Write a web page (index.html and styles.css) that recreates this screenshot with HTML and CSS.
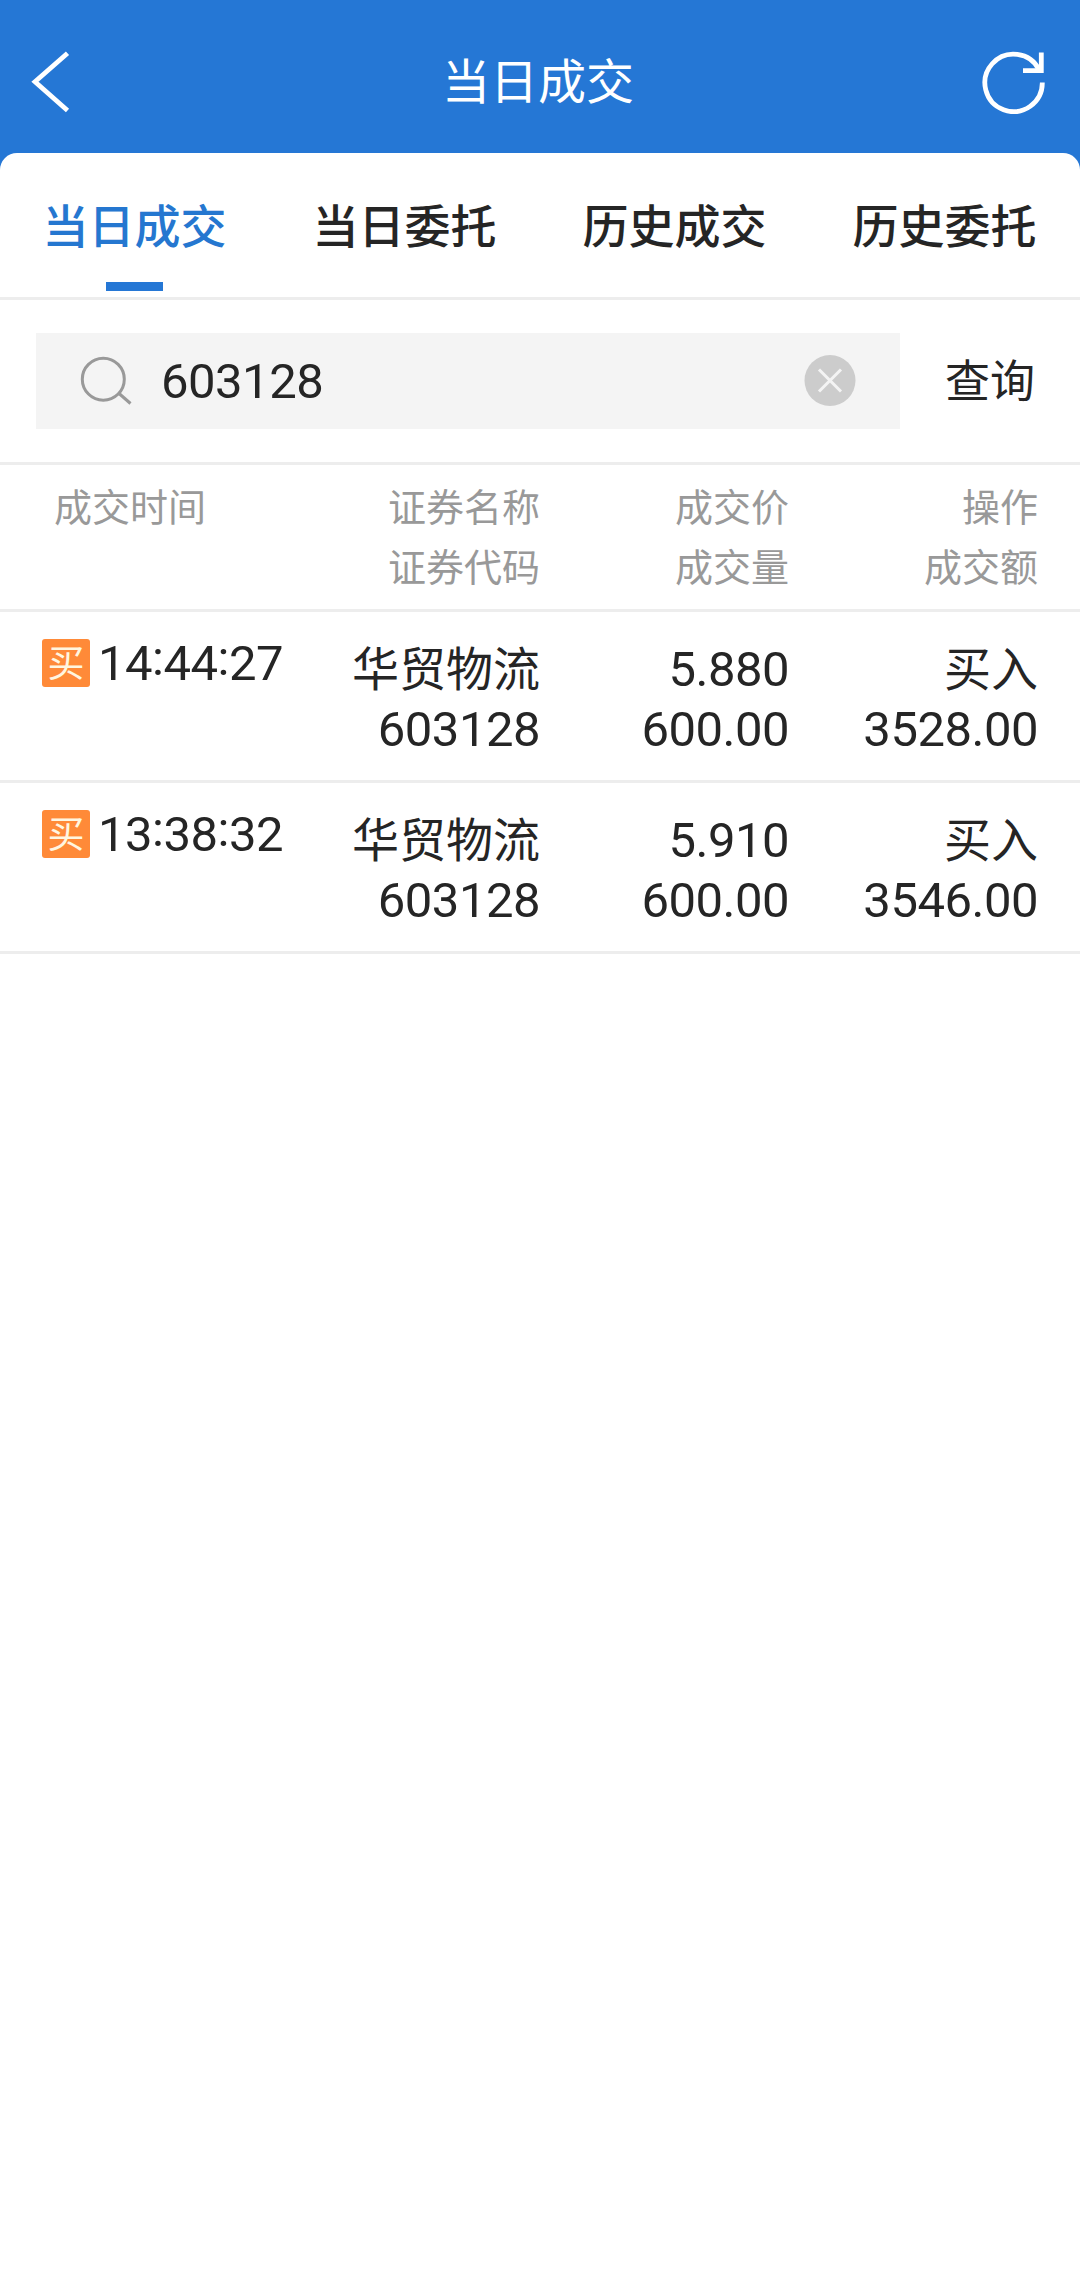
FILE: index.html
```html
<!DOCTYPE html>
<html lang="zh-CN">
<head>
    <meta charset="UTF-8">
    <meta name="viewport" content="width=device-width, initial-scale=1.0">
    <title>当日成交</title>
    <link rel="stylesheet" href="styles.css">
</head>
<body>
    <header class="navbar">
        <svg class="back-icon" width="40" height="64" viewBox="0 0 40 64">
            <path d="M36.5 3.2L4 31.8L36.5 60.5"/>
        </svg>
        <h1>当日成交</h1>
        <svg class="refresh-icon" width="64" height="64" viewBox="0 0 64 64">
            <path d="M60.3 32.5A28.7 28.7 0 1 1 57.2 19.9"/>
            <path d="M59.3 2.5V20.7H41"/>
        </svg>
    </header>

    <main class="sheet">
        <nav class="tabs">
            <div class="tab active">当日成交</div>
            <div class="tab">当日委托</div>
            <div class="tab">历史成交</div>
            <div class="tab">历史委托</div>
        </nav>

        <div class="search-section">
            <div class="search-box">
                <svg class="search-icon" width="54" height="50" viewBox="0 0 54 50">
                    <circle cx="23.3" cy="23.2" r="21"/>
                    <path d="M38.5 37L50.5 47.5"/>
                </svg>
                <span class="search-text">603128</span>
                <svg class="clear-icon" width="52" height="52" viewBox="0 0 52 52">
                    <circle cx="26" cy="25.5" r="25.5"/>
                    <path d="M15 14.5L37 36.5M37 14.5L15 36.5"/>
                </svg>
            </div>
            <div class="search-button">查询</div>
        </div>

        <!-- Deal list -->
        <div class="row list-head">
            <div class="time">成交时间</div>
            <div class="cell">
                <div>证券名称</div>
                <div>证券代码</div>
            </div>
            <div class="cell">
                <div>成交价</div>
                <div>成交量</div>
            </div>
            <div class="cell">
                <div>操作</div>
                <div>成交额</div>
            </div>
        </div>
        <div class="row deal">
            <div class="time"><span class="badge">买</span><span class="clock">14<i>:</i>44<i>:</i>27</span></div>
            <div class="cell">
                <div>华贸物流</div>
                <div class="num">603128</div>
            </div>
            <div class="cell">
                <div class="num">5.880</div>
                <div class="num">600.00</div>
            </div>
            <div class="cell">
                <div>买入</div>
                <div class="num">3528.00</div>
            </div>
        </div>
        <div class="row deal">
            <div class="time"><span class="badge">买</span><span class="clock">13<i>:</i>38<i>:</i>32</span></div>
            <div class="cell">
                <div>华贸物流</div>
                <div class="num">603128</div>
            </div>
            <div class="cell">
                <div class="num">5.910</div>
                <div class="num">600.00</div>
            </div>
            <div class="cell">
                <div>买入</div>
                <div class="num">3546.00</div>
            </div>
        </div>
    </main>
</body>
</html>
```
FILE: styles.css
```css
* {
    box-sizing: border-box;
}
body {
    margin: 0;
    min-height: 100vh;
    display: flex;
    flex-direction: column;
    background-color: #2577d5;
    color: #252525;
    font-family: Roboto, "Noto Sans CJK SC", sans-serif;
}
svg {
    flex: none;
    fill: none;
}
.navbar {
    height: 153px;
    padding: 11px 34px 0 31px;
    display: flex;
    align-items: center;
    justify-content: space-between;
    color: white;
}
.navbar h1 {
    margin: 0 0 0 23px;
    padding-top: 1px;
    font-size: 48px;
    font-weight: 400;
    line-height: 60px;
}
.back-icon,
.refresh-icon {
    stroke: white;
    stroke-width: 4.8;
}
.sheet {
    flex: 1;
    background-color: white;
    border-radius: 17px 17px 0 0;
}

/* Tabs */
.tabs {
    height: 147px;
    display: flex;
    border-bottom: 3px solid #ededed;
}
.tab {
    flex: 1;
    display: flex;
    flex-direction: column;
    align-items: center;
    padding: 44px 1px 0 0;
    font-size: 46px;
    font-weight: 500;
    line-height: 60px;
}
.tab.active {
    color: #2577d0;
}
.tab.active::after {
    content: "";
    width: 57px;
    height: 9px;
    margin-top: 25px;
    background-color: #2577d5;
}

/* Search */
.search-section {
    display: flex;
    align-items: center;
    height: 165px;
    padding: 0 0 0 36px;
    border-bottom: 3px solid #ededed;
}
.search-box {
    width: 864px;
    height: 96px;
    display: flex;
    align-items: center;
    padding: 0 44px;
    background-color: #f4f4f4;
}
.search-icon {
    stroke: #999;
    stroke-width: 3;
}
.search-text {
    flex: 1;
    margin-left: 27px;
    padding-top: 2px;
    font-size: 49px;
    letter-spacing: -0.5px;
    line-height: 60px;
}
.clear-icon {
    stroke: #f4f4f4;
    stroke-width: 3;
}
.clear-icon circle {
    fill: #ccc;
    stroke: none;
}
.search-button {
    flex: 1;
    padding-top: 3px;
    text-align: center;
    font-size: 45px;
    line-height: 60px;
}

/* List */
.row {
    display: grid;
    grid-template-columns: 294px 246px 249px 249px;
    border-bottom: 3px solid #ededed;
    line-height: 60px;
}
.cell {
    text-align: right;
}
.list-head {
    height: 147px;
    padding-top: 13px;
    color: #999;
    font-size: 38px;
}
.list-head .time {
    padding-left: 54px;
}
.deal {
    height: 171px;
    padding-top: 28px;
    font-size: 47px;
}
.deal .time {
    display: flex;
    align-items: center;
    gap: 8px;
    height: 48px;
    margin-top: -1px;
    padding-left: 42px;
}
.num,
.clock {
    font-size: 49px;
    letter-spacing: -0.5px;
}
.clock {
    padding-top: 2px;
}
.clock i {
    font-style: normal;
    vertical-align: 5px;
    line-height: 1;
}
.badge {
    width: 48px;
    height: 48px;
    border-radius: 3px;
    background-color: #ff8a38;
    color: #fff6e0;
    font-size: 37px;
    line-height: 51px;
    text-align: center;
}
```
